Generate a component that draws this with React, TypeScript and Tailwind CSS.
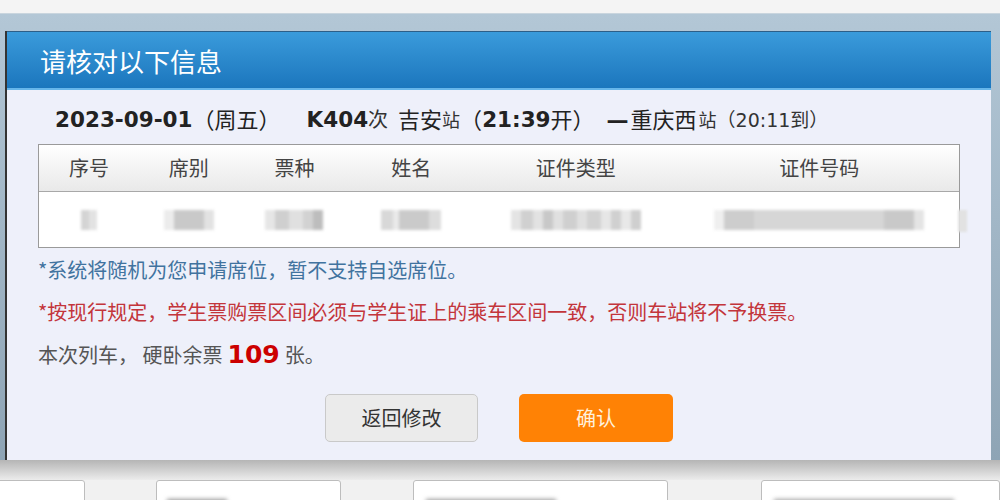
const cjk = { fontFamily: '"DejaVu Sans", "Noto Sans CJK SC", sans-serif' };
const hei = { fontFamily: '"Noto Sans CJK SC", sans-serif' };

type Col = { title: string; width: string; blocks: string[] };

// mosaic blocks stand in for the masked passenger data
const columns: Col[] = [
    { title: "序号", width: "w-[100px]", blocks: ["w-[8px] bg-[#d4d4d4]", "w-[8px] bg-[#e2e2e2]"] },
    { title: "席别", width: "w-[100px]", blocks: ["w-[10px] bg-[#ececec]", "w-[30px] bg-[#c9c9c9]", "w-[10px] bg-[#e2e2e2]"] },
    { title: "票种", width: "w-[112px]", blocks: ["w-[10px] bg-[#e6e6e6]", "w-[14px] bg-[#cfcfcf]", "w-[14px] bg-[#e0e0e0]", "w-[10px] bg-[#d2d2d2]", "w-[10px] bg-[#bdbdbd]"] },
    { title: "姓名", width: "w-[122px]", blocks: ["w-[12px] bg-[#d8d8d8]", "w-[6px] bg-[#eaeaea]", "w-[30px] bg-[#cacaca]", "w-[12px] bg-[#dddddd]"] },
    { title: "证件类型", width: "w-[208px]", blocks: ["w-[10px] bg-[#e4e4e4]", "w-[12px] bg-[#d0d0d0]", "w-[10px] bg-[#e2e2e2]", "w-[10px] bg-[#c8c8c8]", "w-[10px] bg-[#e0e0e0]", "w-[14px] bg-[#cfcfcf]", "w-[10px] bg-[#e0e0e0]", "w-[14px] bg-[#d2d2d2]", "w-[10px] bg-[#e6e6e6]", "w-[10px] bg-[#d0d0d0]", "w-[10px] bg-[#e8e8e8]", "w-[10px] bg-[#cfcfcf]"] },
    { title: "证件号码", width: "w-[280px]", blocks: ["w-[10px] bg-[#efefef]", "w-[30px] bg-[#cdcdcd]", "w-[130px] bg-[#d6d6d6]", "w-[30px] bg-[#c9c9c9]", "w-[10px] bg-[#e4e4e4]"] },
];

function TrainLine() {
    return (
        <div className="h-[30px] flex items-center pl-[48px] text-[22px] text-[#222] whitespace-nowrap" style={cjk}>
            <span className="font-bold text-[21.5px]">2023-09-01</span>
            <span>（周五）</span>
            <span className="ml-[26px] font-bold text-[21.5px]">K404</span>
            <span className="text-[20px] text-[#333]">次</span>
            <span className="ml-[10px]">吉安</span>
            <span className="text-[18px] text-[#333]">站</span>
            <span>（</span>
            <span className="font-bold text-[21.5px]">21:39</span>
            <span>开）</span>
            <span className="ml-[12px] font-bold">—</span>
            <span className="ml-[2px]">重庆西</span>
            <span className="ml-[2px] text-[18px] text-[#333]">站</span>
            <span className="text-[19px] text-[#333]">（20:11到）</span>
        </div>
    );
}

function PassengerTable() {
    return (
        <div className="mt-[9px] mx-[31px] border border-[#9a9a9a] bg-white">
            <div className="flex h-[47px] border-b border-[#a8a8a8] bg-gradient-to-b from-[#ffffff] to-[#e9e9e9]">
                {columns.map((col) => (
                    <div key={col.title} className={`${col.width} flex items-center justify-center text-[20px] text-[#444]`} style={hei}>
                        {col.title}
                    </div>
                ))}
            </div>
            <div className="flex h-[55px] relative">
                {columns.map((col) => (
                    <div key={col.title + "-row"} className={`${col.width} flex items-center justify-center`}>
                        <div className="flex h-[20px] blur-[1.5px]">
                            {col.blocks.map((b, i) => (
                                <div key={i} className={`${b} h-full`} />
                            ))}
                        </div>
                    </div>
                ))}
                <div className="absolute right-[-8px] top-[18px] w-[9px] h-[22px] bg-[#e2e2e2] blur-[1px]" />
            </div>
        </div>
    );
}

export default function App() {
    return (
        <div className="w-[1000px] h-[500px] overflow-hidden bg-[#f1f1f1] flex flex-col">
            <div className="h-[14px] shrink-0 bg-[#f4f4f4] border-b border-[#c9d5de]" />
            <div className="shrink-0 pt-[17px] pl-[5px] pr-[9px] bg-gradient-to-b from-[#b3c7d6] to-[#8ea4b5]">
                <div className="w-[986px] h-[429px] flex flex-col bg-[#eef0fa] border-l-2 border-[#333]">
                    <div className="h-[59px] shrink-0 flex items-center pl-[33px] bg-gradient-to-b from-[#3a9bdb] to-[#1b76bd] border-b-2 border-[#67b6ea] border-t border-t-[#2c5f88]">
                        <span className="text-[26px] text-white" style={hei}>请核对以下信息</span>
                    </div>
                    <div className="pt-[15px]">
                        <TrainLine />
                        <PassengerTable />
                        <div className="mt-[8px] pl-[31px] text-[20px] leading-[28px]" style={hei}>
                            <p className="text-[#41739f]">*系统将随机为您申请席位，暂不支持自选席位。</p>
                            <p className="mt-[14px] text-[#c3353b]">*按现行规定，学生票购票区间必须与学生证上的乘车区间一致，否则车站将不予换票。</p>
                            <p className="mt-[15px] text-[#555] flex items-center">
                                <span>本次列车， 硬卧余票</span>
                                <span className="mx-[5px] text-[25px] font-bold text-[#cc0000]" style={cjk}>109</span>
                                <span>张。</span>
                            </p>
                        </div>
                        <div className="mt-[25px] flex justify-center gap-[41px]">
                            <button className="w-[153px] h-[48px] rounded-[5px] border border-[#c9c9c9] bg-[#ebebeb] text-[20px] text-[#333]" style={hei}>
                                返回修改
                            </button>
                            <button className="w-[154px] h-[48px] rounded-[5px] bg-[#ff8205] text-[20px] text-[#fff1dc]" style={hei}>
                                确认
                            </button>
                        </div>
                    </div>
                </div>
            </div>
            <div className="h-[20px] shrink-0 bg-gradient-to-b from-[#b5b5b5] to-[#ececec]" />
            <div className="flex-1 flex items-start text-[16px]">
                <div className="w-[86px] h-[30px] bg-white border border-[#bdbdbd] rounded-tr-[3px] -ml-[1px]" />
                <div className="ml-[71px] w-[186px] h-[30px] bg-white border border-[#bdbdbd] rounded-[3px] flex items-end pl-[10px]">
                    <div className="w-[60px] h-[10px] bg-[#9a9a9a] blur-[2px]" />
                </div>
                <div className="ml-[72px] w-[255px] h-[30px] bg-white border border-[#bdbdbd] rounded-[3px] flex items-end pl-[12px]">
                    <div className="w-[130px] h-[10px] bg-[#a0a0a0] blur-[2px]" />
                </div>
                <div className="ml-[93px] w-[240px] h-[30px] bg-white border border-[#bdbdbd] rounded-[3px] flex items-end pl-[12px]">
                    <div className="w-[180px] h-[10px] bg-[#a8a8a8] blur-[2px]" />
                </div>
            </div>
        </div>
    );
}
